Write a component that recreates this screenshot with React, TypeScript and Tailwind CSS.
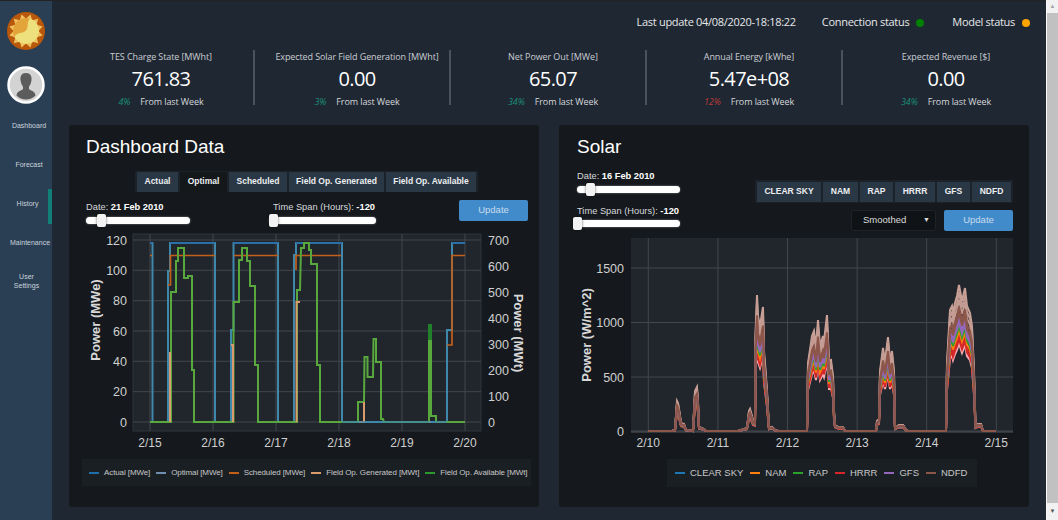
const STATS = [
  { label: 'TES Charge State [MWht]', value: '761.83', pct: '4%', good: true },
  { label: 'Expected Solar Field Generation [MWht]', value: '0.00', pct: '3%', good: true },
  { label: 'Net Power Out [MWe]', value: '65.07', pct: '34%', good: true },
  { label: 'Annual Energy [kWhe]', value: '5.47e+08', pct: '12%', good: false },
  { label: 'Expected Revenue [$]', value: '0.00', pct: '34%', good: true },
];

const LEFT_LEGEND = [
  { name: 'Actual [MWe]', color: '#1f6fa8' },
  { name: 'Optimal [MWe]', color: '#6f8fb0' },
  { name: 'Scheduled [MWe]', color: '#c2601a' },
  { name: 'Field Op. Generated [MWt]', color: '#d99a6c' },
  { name: 'Field Op. Available [MWt]', color: '#2b9a2e' },
];

const RIGHT_LEGEND = [
  { name: 'CLEAR SKY', color: '#1f77b4' },
  { name: 'NAM', color: '#ff7f0e' },
  { name: 'RAP', color: '#2ca02c' },
  { name: 'HRRR', color: '#d62728' },
  { name: 'GFS', color: '#9467bd' },
  { name: 'NDFD', color: '#8c564b' },
];

type Pt = [number, number];

const pts = (a: Pt[]) => a.map((p) => p.join(',')).join(' ');

// chart 1, in plot pixels
const OPTIMAL: Pt[] = [
  [150, 243], [152.5, 243], [152.5, 422], [168, 422], [168, 271], [170, 271], [170, 243], [215, 243], [215, 422],
  [231, 422], [231, 330], [233.5, 330], [233.5, 243], [278, 243], [278, 422], [294, 422], [294, 255], [296, 255],
  [296, 243], [342, 243], [342, 422], [447, 422], [447, 330], [452, 330], [452, 243], [465, 243],
];
const SCHEDULED: Pt[][] = [
  [[150, 255.5], [152, 255.5]],
  [[168, 285], [170.5, 285], [170.5, 255.5], [215, 255.5]],
  [[234, 255.5], [278, 255.5]],
  [[296, 270], [296, 255.5], [341, 255.5]],
  [[447, 345], [452, 345], [452, 255.5], [465, 255.5]],
];
const GENERATED: Pt[][] = [
  [[170, 422], [170, 352]],
  [[233, 422], [233, 345], [231, 345]],
  [[296.5, 422], [296.5, 302], [300, 302]],
  [[359, 422], [364, 422], [364, 402]],
  [[429, 422], [431, 422]],
];
const AVAILABLE: Pt[] = [
  [150, 422], [152, 422], [171, 422], [171, 292], [176, 292], [176, 261], [178, 261], [178, 248], [184, 248],
  [184, 278], [188, 278], [188, 276], [192, 276], [192, 370], [194, 370], [194, 422], [233.5, 422], [233.5, 302],
  [239, 302], [239, 260], [242, 260], [242, 248], [247, 248], [247, 261], [250, 261], [250, 286], [255, 286],
  [255, 365], [258, 365], [258, 422], [297, 422], [297, 290], [300, 290], [301, 248], [304, 248], [304, 243],
  [309, 243], [309, 250], [311, 250], [311, 264], [317, 264], [317, 365], [320, 365], [320, 422], [358, 422],
  [358, 402], [364, 402], [364.5, 357], [367.5, 357], [367.5, 377], [373, 377], [373.5, 339], [376, 339], [376, 362],
  [381, 362], [381, 419], [383, 419], [384, 422], [429, 422], [429, 341], [431, 341], [431, 416], [436, 416],
  [436, 422], [465, 422],
];

// chart 2: envelope as x + height above the zero line
const SOLAR: Pt[] = [
  [648, 0], [672, 0], [675, 1], [677, 30], [678, 28], [679, 22], [681, 8], [684, 7], [686, 1], [693, 0], [695, 40],
  [697, 44], [698, 30], [699, 4], [704, 2], [706, 0], [738, 0], [741, 1], [747, 3], [749, 20], [750, 22], [752, 15],
  [753, 10], [755, 9], [755.6, 100], [757, 136], [758, 115], [760, 105], [763, 124], [764, 80], [765, 68], [767, 40],
  [769, 3], [772, 4], [775, 1], [778, 0], [807, 0], [808, 68], [812, 95], [814, 100], [816, 85], [818, 111], [820, 85],
  [823, 95], [824, 90], [827, 116], [829, 70], [831, 71], [833, 55], [834, 20], [835, 6], [838, 4], [843, 4], [845, 0],
  [876, 0], [877, 10], [879, 12], [880, 60], [883, 83], [885, 70], [888, 94], [890, 70], [892, 80], [894, 60], [895, 3],
  [899, 6], [903, 6], [906, 1], [908, 0], [946, 0], [947, 68], [950, 121], [952, 125], [953, 118], [955, 128], [957, 135],
  [959, 146], [962, 130], [965, 143], [967, 125], [970, 118], [972, 105], [974, 60], [975.5, 5], [978, 7], [981, 7],
  [983, 0], [996, 0],
];

const scaled = (k: number) => pts(SOLAR.map(([x, h]) => [x, 431 - h * k] as Pt));

const SOLAR_LAYERS = [
  { k: 1, color: '#c9a196' },
  { k: 0.95, color: '#c49c94' },
  { k: 0.9, color: '#c49c94' },
  { k: 0.6, color: '#f7a8b0' },
  { k: 0.63, color: '#d62728' },
  { k: 0.66, color: '#d62728' },
  { k: 0.69, color: '#ff7f0e' },
  { k: 0.72, color: '#2ca02c' },
  { k: 0.75, color: '#9467bd' },
  { k: 0.78, color: '#9467bd' },
  { k: 0.81, color: '#8c564b' },
  { k: 0.85, color: '#8c564b' },
];

const tickStyle = { fontFamily: '"Liberation Sans", Arial, sans-serif' };

function Slider({ width, thumb }: { width: string; thumb: string }) {
  return (
    <div className={`relative h-[7px] rounded-full bg-white shadow-[0_0_2px_rgba(255,255,255,0.5)] ${width}`}>
      <div className={`absolute top-[-3px] h-[13px] w-[9px] rounded-[2px] bg-[#f2f2f2] shadow-[0_0_3px_rgba(0,0,0,0.6)] ${thumb}`} />
    </div>
  );
}

function Logo() {
  const rays = Array.from({ length: 12 }, (_, i) => i * 30 + 15);
  return (
    <svg width="40" height="40" viewBox="0 0 40 40">
      <circle cx="20" cy="20" r="19" fill="#b9570b" />
      {rays.map((r) => (
        <polygon key={r} points="16.8,8 23.2,8 20,2.8" fill="#f0c262" transform={`rotate(${r} 20 20)`} />
      ))}
      <circle cx="20" cy="20" r="13" fill="#e3a53a" />
      <path d="M24 7.6 A13 13 0 0 1 20 33 A13 13 0 0 1 8.5 26 C11 20.5 17 23 20 19.5 C23 16 20.5 11 24 7.6 Z" fill="#eee07c" />
    </svg>
  );
}

function Avatar() {
  return (
    <svg width="38" height="38" viewBox="0 0 38 38">
      <circle cx="19" cy="19" r="17.5" fill="#d3d3d3" stroke="#ffffff" strokeWidth="2.5" />
      <path
        d="M19 7 C14.5 7 13 10.5 13.5 14 C14 17 14.5 19 16 20.5 L16 23 C14 25 10 25 9.5 29.5 C12 32 15.5 33.5 19 33.5 C22.5 33.5 26 32 28.5 29.5 C28 25 24 25 22 23 L22 20.5 C23.5 19 24 17 24.5 14 C25 10.5 23.5 7 19 7 Z"
        fill="#5c5c5c"
      />
    </svg>
  );
}

function Sidebar() {
  return (
    <aside className="relative flex w-[52px] shrink-0 flex-col items-center bg-[#2a3f54] font-['Liberation_Sans',Arial,sans-serif] text-[7px] text-[#c9d3dc]">
      <div className="mt-[10px]"><Logo /></div>
      <div className="mt-[15px]"><Avatar /></div>
      <div className="mt-[17px] flex h-[10px] items-center pl-[6px]">Dashboard</div>
      <div className="mt-[29px] flex h-[10px] items-center pl-[6px]">Forecast</div>
      <div className="mt-[29px] flex h-[10px] items-center pl-[3px]">History</div>
      <div className="mt-[29px] flex h-[10px] items-center pl-[8px]">Maintenance</div>
      <div className="mt-[24px] pl-[1px] text-center leading-[9px]">User<br />Settings</div>
      <div className="absolute left-[48px] top-[188px] h-[35px] w-[4px] bg-[#0f7f78]" />
    </aside>
  );
}

function TopBar() {
  return (
    <div className="flex h-[43px] items-center justify-end pr-[16px] text-[11px] tracking-[-0.3px] text-[#e6e8ea]">
      <span className="mr-[26px]">Last update 04/08/2020-18:18:22</span>
      <span>Connection status</span>
      <span className="ml-[7px] mr-[28px] h-[8px] w-[8px] rounded-full bg-[#008000]" />
      <span>Model status</span>
      <span className="ml-[7px] h-[8px] w-[8px] rounded-full bg-[#ffa500]" />
    </div>
  );
}

function StatsRow() {
  return (
    <div className="mt-[6px] flex pl-[7px]">
      {STATS.map((s, i) => (
        <div key={s.label} className={`flex h-[55px] w-[196px] flex-col items-center pl-[10px] ${i < 4 ? 'border-r-2 border-[#4a525b]' : ''}`}>
          <div className="text-[9px] leading-[14px] tracking-[-0.1px] text-[#c9cdd2]">{s.label}</div>
          <div className="text-[20px] font-medium leading-[30px] tracking-[-0.6px] text-white">{s.value}</div>
          <div className="mt-[1px] flex gap-[10px] text-[9px] leading-[14px] tracking-[-0.1px] text-[#d5d8dc]">
            <span className={`italic ${s.good ? 'text-[#1a8f78]' : 'text-[#b83a3a]'}`}>{s.pct}</span>
            <span>From last Week</span>
          </div>
        </div>
      ))}
    </div>
  );
}

function DashboardChart() {
  const gridY = [240, 270.3, 300.7, 331, 361.3, 391.7, 422];
  const gridX = [150, 213, 276, 339, 402, 465];
  const labelsL = ['120', '100', '80', '60', '40', '20', '0'];
  const labelsR: Pt[] = [[700, 240.7], [600, 266.6], [500, 292.5], [400, 318.4], [300, 344.2], [200, 370.2], [100, 396], [0, 422]];
  const days = ['2/15', '2/16', '2/17', '2/18', '2/19', '2/20'];
  return (
    <svg width="470" height="226" viewBox="69 232 470 226" className="block" style={tickStyle}>
      <rect x="133" y="234" width="348" height="197" fill="#21262c" stroke="#2f353b" />
      {gridY.map((y) => <line key={y} x1="133" x2="481" y1={y} y2={y} stroke="#41474d" />)}
      {gridX.map((x) => <line key={x} x1={x} x2={x} y1="234" y2="431" stroke="#41474d" />)}
      {labelsL.map((t, i) => (
        <text key={t} x="127" y={gridY[i] + 4.5} textAnchor="end" fontSize="12.5" fill="#cfcfcf">{t}</text>
      ))}
      {labelsR.map(([t, y]) => (
        <text key={t} x="488" y={y + 4.5} fontSize="12.5" fill="#cfcfcf">{t}</text>
      ))}
      {days.map((d, i) => (
        <text key={d} x={gridX[i]} y="447" textAnchor="middle" fontSize="12" fill="#cfcfcf">{d}</text>
      ))}
      <text transform="translate(100 320) rotate(-90)" textAnchor="middle" fontSize="13" fontWeight="700" fill="#d8d8d8">Power (MWe)</text>
      <text transform="translate(514 333) rotate(90)" textAnchor="middle" fontSize="13" fontWeight="700" fill="#d8d8d8">Power (MWt)</text>
      <polyline points={pts(OPTIMAL)} fill="none" stroke="#3f88ab" strokeWidth="2" />
      <polyline points="150,243 152.5,243" fill="none" stroke="#2a6fa8" strokeWidth="2" />
      <polyline points="170,243 215,243" fill="none" stroke="#2a6fa8" strokeWidth="2" />
      <polyline points="233.5,243 278,243" fill="none" stroke="#2a6fa8" strokeWidth="2" />
      <polyline points="296,243 342,243" fill="none" stroke="#2a6fa8" strokeWidth="2" />
      <polyline points="452,243 465,243" fill="none" stroke="#2a6fa8" strokeWidth="2" />
      {SCHEDULED.map((s, i) => <polyline key={i} points={pts(s)} fill="none" stroke="#c2601a" strokeWidth="1.7" />)}
      <polyline points="429,341 429,325 431,325 431,341" fill="#23802a" stroke="#23802a" strokeWidth="2" />
      <polyline points={pts(AVAILABLE)} fill="none" stroke="#58a83e" strokeWidth="2" />
      {GENERATED.map((s, i) => <polyline key={i} points={pts(s)} fill="none" stroke="#d99a6c" strokeWidth="2" />)}
      <polyline points="342,422 447,422" fill="none" stroke="#3f88ab" strokeWidth="1.6" />
    </svg>
  );
}

function SolarChart() {
  const gridY: Pt[] = [[1500, 268], [1000, 322.5], [500, 377], [0, 431]];
  const gridX = [648.3, 717.9, 787.5, 857.1, 926.7, 996.3];
  const days = ['2/10', '2/11', '2/12', '2/13', '2/14', '2/15'];
  return (
    <svg width="470" height="226" viewBox="559 232 470 226" className="block" style={tickStyle}>
      <rect x="631" y="238" width="382" height="193" fill="#21262c" />
      {gridY.map(([t, y]) => <line key={t} x1="631" x2="1013" y1={y} y2={y} stroke="#41474d" />)}
      {gridX.map((x) => <line key={x} x1={x} x2={x} y1="238" y2="431" stroke="#41474d" />)}
      <line x1="631" x2="1013" y1="432" y2="432" stroke="#52585e" />
      {gridY.map(([t, y]) => (
        <text key={t} x="624" y={y + 4.5} textAnchor="end" fontSize="12.5" fill="#cfcfcf">{t}</text>
      ))}
      {days.map((d, i) => (
        <text key={d} x={gridX[i]} y="447" textAnchor="middle" fontSize="12" fill="#cfcfcf">{d}</text>
      ))}
      <text transform="translate(591 335) rotate(-90)" textAnchor="middle" fontSize="13" fontWeight="700" fill="#d8d8d8">Power (W/m^2)</text>
      {SOLAR_LAYERS.map((l) => (
        <polyline key={l.k} points={scaled(l.k)} fill="none" stroke={l.color} strokeWidth="2" />
      ))}
    </svg>
  );
}

function DashboardPanel() {
  const tabs = [
    { name: 'Actual', w: 'w-[41px]' },
    { name: 'Optimal', w: 'w-[47px]', active: true },
    { name: 'Scheduled', w: 'w-[58px]' },
    { name: 'Field Op. Generated', w: 'w-[95px]' },
    { name: 'Field Op. Available', w: 'w-[90px]' },
  ];
  return (
    <section className="h-[382px] w-[470px] rounded-[3px] bg-[#15191d]">
      <h2 className="pl-[17px] pt-[10px] text-[19px] leading-[24px] text-white">Dashboard Data</h2>
      <div className="ml-[66px] mt-[12px] flex h-[21px] w-fit items-center gap-[2px] bg-[#1b2229] px-[2px]">
        {tabs.map((t) => (
          <div key={t.name} className={`flex h-[20px] items-center justify-center text-[8.5px] font-bold text-[#eceef0] ${t.w} ${t.active ? 'bg-[#14181b]' : 'bg-[#2a3846]'}`}>
            {t.name}
          </div>
        ))}
      </div>
      <div className="flex pl-[17px] pt-[8px]">
        <div className="w-[183px]">
          <div className="pt-[1px] text-[9.3px] leading-[12px] text-[#d5d8dc]">Date: <b className="text-white">21 Feb 2010</b></div>
          <div className="mt-[4px]"><Slider width="w-[104px]" thumb="left-[11px]" /></div>
        </div>
        <div className="w-[190px]">
          <div className="pl-[4px] pt-[1px] text-[9.3px] leading-[12px] text-[#d5d8dc]">Time Span (Hours): <b className="text-white">-120</b></div>
          <div className="mt-[4px]"><Slider width="w-[107px]" thumb="left-0" /></div>
        </div>
        <div className="flex h-[21px] w-[69px] items-center justify-center rounded-[2px] bg-[#428bca] text-[9.5px] text-[#c7dcee]">Update</div>
      </div>
      <div className="mt-[8px]"><DashboardChart /></div>
      <div className="ml-[13px] mt-[1px] flex h-[27px] w-[449px] items-center gap-[6px] bg-[#1a1f24] pl-[7px] text-[8px] tracking-[-0.1px] text-[#c8c8c8]">
        {LEFT_LEGEND.map((l) => (
          <div key={l.name} className="flex items-center gap-[5px]">
            <span className="h-[2px] w-[10px]" style={{ backgroundColor: l.color }} />
            <span>{l.name}</span>
          </div>
        ))}
      </div>
    </section>
  );
}

function SolarPanel() {
  const sources = [
    { name: 'CLEAR SKY', w: 'w-[64px]' },
    { name: 'NAM', w: 'w-[35px]' },
    { name: 'RAP', w: 'w-[33px]' },
    { name: 'HRRR', w: 'w-[40px]' },
    { name: 'GFS', w: 'w-[33px]' },
    { name: 'NDFD', w: 'w-[39px]' },
  ];
  return (
    <section className="h-[382px] w-[470px] rounded-[3px] bg-[#15191d]">
      <h2 className="pl-[18px] pt-[10px] text-[19px] leading-[24px] text-white">Solar</h2>
      <div className="flex justify-between pl-[18px] pr-[16px]">
        <div className="w-[104px] pt-[11px]">
          <div className="text-[9.3px] leading-[12px] text-[#d5d8dc]">Date: <b className="text-white">16 Feb 2010</b></div>
          <div className="mt-[4px]"><Slider width="w-[103px]" thumb="left-[9px]" /></div>
          <div className="mt-[12px] w-[140px] text-[9.3px] leading-[12px] text-[#d5d8dc]">Time Span (Hours): <b className="text-white">-120</b></div>
          <div className="mt-[3px]"><Slider width="w-[103px]" thumb="left-[-4px]" /></div>
        </div>
        <div className="flex flex-col items-end pt-[21px]">
          <div className="flex h-[23px] items-center gap-[2px] bg-[#1b2229] px-[2px]">
            {sources.map((s) => (
              <div key={s.name} className={`flex h-[20px] items-center justify-center bg-[#2a3846] text-[8.5px] font-bold text-[#eceef0] ${s.w}`}>
                {s.name}
              </div>
            ))}
          </div>
          <div className="mt-[7px] flex gap-[8px]">
            <div className="flex h-[21px] w-[85px] items-center justify-between rounded-[2px] border border-[#1e2328] bg-[#101316] pl-[11px] pr-[5px] text-[9.5px] text-[#dcdcdc]">
              <span>Smoothed</span>
              <span className="text-[7px]">▼</span>
            </div>
            <div className="flex h-[21px] w-[69px] items-center justify-center rounded-[2px] bg-[#428bca] text-[9.5px] text-[#c7dcee]">Update</div>
          </div>
        </div>
      </div>
      <div className="mt-[1px]"><SolarChart /></div>
      <div className="ml-[108px] mt-[1px] flex h-[28px] w-[310px] items-center gap-[7px] bg-[#1a1f24] pl-[8px] text-[9.5px] text-[#c8c8c8]">
        {RIGHT_LEGEND.map((l) => (
          <div key={l.name} className="flex items-center gap-[5px]">
            <span className="h-[2px] w-[10px]" style={{ backgroundColor: l.color }} />
            <span>{l.name}</span>
          </div>
        ))}
      </div>
    </section>
  );
}

function Scrollbar() {
  return (
    <div className="flex w-[12px] shrink-0 flex-col border-l border-[#fafafa] bg-[#f1f1f1]">
      <div className="flex h-[13px] items-center justify-center text-[6px] text-[#a3a3a3]">▲</div>
      <div className="h-[490px] bg-[#c1c1c1]" />
      <div className="flex h-[17px] items-center justify-center text-[6px] text-[#505050]">▼</div>
    </div>
  );
}

export default function App() {
  return (
    <div className="flex h-[520px] w-[1058px] overflow-hidden bg-[#1f2732] font-['Open_Sans',Arial,sans-serif]">
      <div className="flex min-w-0 flex-1 flex-col">
        <div className="h-px shrink-0 bg-[#232323]" />
        <div className="flex min-h-0 flex-1">
          <Sidebar />
          <main className="min-w-0 flex-1">
            <TopBar />
            <StatsRow />
            <div className="ml-[17px] mt-[20px] flex gap-[20px] font-['Liberation_Sans',Arial,sans-serif]">
              <DashboardPanel />
              <SolarPanel />
            </div>
          </main>
        </div>
      </div>
      <Scrollbar />
    </div>
  );
}
